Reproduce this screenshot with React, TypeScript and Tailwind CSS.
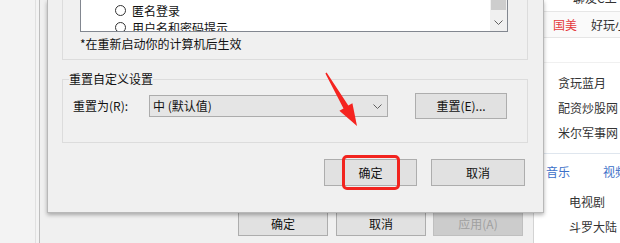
import React from "react";

function Chevron() {
  return (
    <svg width="9" height="5" viewBox="0 0 9 5" className="shrink-0">
      <path d="M0.5 0.5 L4.5 4.5 L8.5 0.5" fill="none" stroke="#606060" strokeWidth="1" />
    </svg>
  );
}

function Radio({ label }: { label: string }) {
  return (
    <div className="flex h-[17px] items-center gap-[6px] pl-[34px]">
      <span className="h-[11px] w-[11px] rounded-full border border-[#333] bg-white" />
      <span className="leading-[17px]">{label}</span>
    </div>
  );
}

function WinButton({
  children,
  className = "",
  disabled = false,
}: {
  children: React.ReactNode;
  className?: string;
  disabled?: boolean;
}) {
  return (
    <div
      className={`flex items-center justify-center border leading-[14px] ${
        disabled
          ? "border-[#bfbfbf] bg-[#cccccc] text-[#a0a0a0]"
          : "border-[#adadad] bg-[#e1e1e1] text-[#111]"
      } ${className}`}
    >
      {children}
    </div>
  );
}

export default function App() {
  return (
    <div className="relative flex h-[243px] w-[620px] overflow-hidden bg-[#f0f0f0] font-['Noto_Sans_CJK_SC',sans-serif] text-[12px] text-[#111]">
      {/* desktop strip at the left */}
      <div className="flex w-[40px] shrink-0 justify-end border-r border-[#bdbdbd] bg-[#f3f3f3]">
        <div className="mr-[3px] w-px bg-[#e0e0e0]" />
      </div>

      {/* window behind the dialog */}
      <div className="flex w-[493px] shrink-0 flex-col justify-end pb-[7px] pr-[10px]">
        <div className="flex justify-end">
          <WinButton className="h-[25px] w-[90px]">确定</WinButton>
          <WinButton className="ml-[8px] h-[25px] w-[90px]">取消</WinButton>
          <WinButton className="ml-[7px] h-[25px] w-[90px]" disabled>
            应用(A)
          </WinButton>
        </div>
      </div>

      {/* web page at the right */}
      <div className="flex min-w-0 flex-1 flex-col overflow-hidden whitespace-nowrap border-l border-[#d3d3d3] bg-white text-[#333]">
        <div className="h-[12px] shrink-0 overflow-hidden border-b border-[#e6e6e6] pl-[39px]">
          <div className="-mt-[9px] leading-[14px]">聊友C上</div>
        </div>
        <div className="flex h-[26px] shrink-0 items-center gap-[14px] border-b border-[#e6e6e6] bg-[#fafafa] pl-[19px] leading-[14px]">
          <span className="text-[#e4393c]">国美</span>
          <span>好玩小游戏</span>
        </div>
        <div className="h-[25px] shrink-0 border-b border-[#f0f0f0]" />
        <div className="flex flex-col pl-[24px] pt-[7px] leading-[25px]">
          <span>贪玩蓝月</span>
          <span>配资炒股网</span>
          <span>米尔军事网</span>
        </div>
        <div className="mt-[8px] h-[36px] shrink-0 border-t border-[#dfe6ee]">
          <div className="flex h-full items-center gap-[33px] pl-[12px] leading-[14px] text-[#3b70c8]">
            <span>音乐</span>
            <span>视频</span>
          </div>
        </div>
        <div className="flex flex-col pl-[35px] leading-[25px]">
          <span>电视剧</span>
          <span>斗罗大陆</span>
        </div>
      </div>

      {/* the dialog window on top */}
      <div className="absolute left-[47px] top-0 flex h-[213px] w-[497px] flex-col border-x border-b border-[#b8b8b8] bg-[#f0f0f0] shadow-[0_2px_4px_rgba(0,0,0,0.3)]">
        <div className="-mt-[10px] ml-[14px] flex h-[70px] w-[466px] shrink-0 flex-col border border-[#dcdcdc] pt-[7px]">
          <div className="ml-[17px] flex h-[34px] w-[428px] border border-[#828790] bg-white">
            <div className="flex flex-1 flex-col overflow-hidden pt-[3px]">
              <Radio label="匿名登录" />
              <Radio label="用户名和密码提示" />
            </div>
            <div className="flex w-[17px] flex-col bg-[#f0f0f0]">
              <div className="mx-px h-[11px] bg-[#cdcdcd]" />
              <div className="flex-1" />
              <div className="flex h-[17px] items-center justify-center">
                <Chevron />
              </div>
            </div>
          </div>
          <p className="ml-[17px] mt-[5px] leading-[14px]">*在重新启动你的计算机后生效</p>
        </div>

        <fieldset className="ml-[14px] mt-[12px] w-[466px] border border-[#dcdcdc] pb-[23px]">
          <legend className="ml-[6px] leading-[14px]">重置自定义设置</legend>
          <div className="mt-[7px] flex items-center pl-[10px] leading-[14px]">
            <span className="w-[76px]">重置为(R):</span>
            <div className="flex h-[22px] w-[239px] items-center justify-between border border-[#acacac] bg-[#e5e5e5] pl-[3px] pr-[5px]">
              <span>中 (默认值)</span>
              <Chevron />
            </div>
            <WinButton className="ml-[27px] h-[26px] w-[92px]">重置(E)...</WinButton>
          </div>
        </fieldset>

        <div className="mt-[16px] flex justify-end gap-[14px] pr-[18px]">
          <WinButton className="h-[27px] w-[93px]">确定</WinButton>
          <WinButton className="h-[27px] w-[94px]">取消</WinButton>
        </div>
      </div>

      {/* red annotation */}
      <div className="absolute left-[342px] top-[155px] h-[35px] w-[58px] rounded-[5px] border-[3px] border-[#f2241f]" />
      <svg className="pointer-events-none absolute left-0 top-0" width="620" height="243">
        <polygon
          points="325.4,73.4 343.5,108.4 339.4,110.8 357,126 352.4,103.2 348.3,105.6 326.6,72.6"
          fill="#f52420"
        />
      </svg>
    </div>
  );
}
